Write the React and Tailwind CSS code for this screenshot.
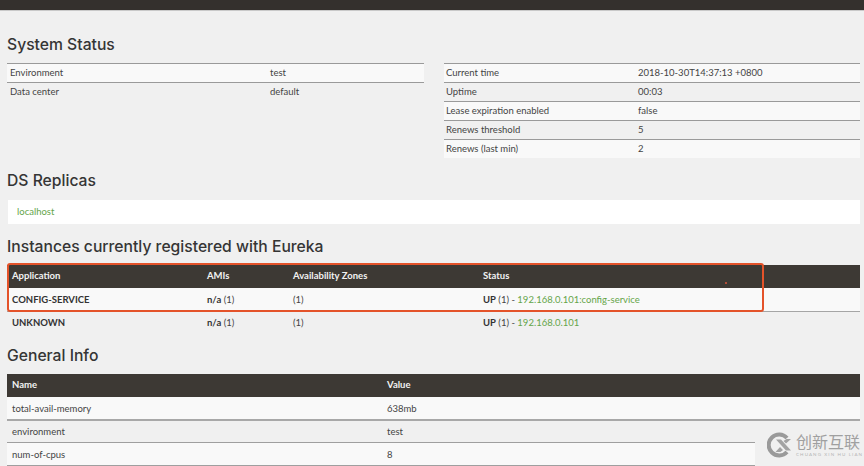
const body = { fontFamily: 'Lato, "Liberation Sans", sans-serif' };
const head = { fontFamily: '"Inter", "Liberation Sans", sans-serif' };

function Title({ children, className = "" }) {
  return (
    <h2 style={head} className={`text-[15.7px] leading-[24px] font-medium text-[#353535] ${className}`}>
      {children}
    </h2>
  );
}

function StatusTable({ rows, first, pad, className = "" }) {
  return (
    <div className={className}>
      {rows.map(([k, v], i) => (
        <div
          key={k}
          className={`flex h-[19px] items-center border-t border-[#9a9a9a] ${pad} ${i % 2 === 0 ? "bg-[#f9f9f9]" : ""}`}
        >
          <div style={{ width: first }} className="shrink-0">{k}</div>
          <div>{v}</div>
        </div>
      ))}
    </div>
  );
}

function Up({ link }) {
  return (
    <>
      <b className="font-bold text-[#333]">UP</b> (1) - <a className="text-[#65a54a]">{link}</a>
    </>
  );
}

const instances = [
  ["CONFIG-SERVICE", "192.168.0.101:config-service", "bg-[#f9f9f9] border-b border-[#a5a5a5] h-[24px] pt-px"],
  ["UNKNOWN", "192.168.0.101", "h-[23px]"],
];

const info = [
  ["total-avail-memory", "638mb", "bg-[#f9f9f9] border-[#a8a8a8] border-b-2 h-[24px] pt-[2px]"],
  ["environment", "test", "border-[#9f9f9f] border-b h-[22px] pt-[2px]"],
  ["num-of-cpus", "8", "bg-[#f9f9f9] border-[#9f9f9f] border-b h-[23px] pt-[2px]"],
];

export default function App() {
  return (
    <div style={body} className="relative h-[466px] w-[864px] overflow-hidden bg-[#f0f0f0] text-[9.5px] text-[#444]">
      <div className="h-[11px] border-b border-[#c9c9c9] bg-[#34302d]" />
      <main className="pl-[7px] pr-[4px]">
        <Title className="pt-[22px]">System Status</Title>
        <div className="mt-[6px] flex h-[96px] gap-[20px]">
          <StatusTable
            className="w-[417px]"
            first={260}
            pad="pl-[3px]"
            rows={[["Environment", "test"], ["Data center", "default"]]}
          />
          <StatusTable
            className="w-[416px]"
            first={192}
            pad="pl-[2px]"
            rows={[
              ["Current time", "2018-10-30T14:37:13 +0800"],
              ["Uptime", "00:03"],
              ["Lease expiration enabled", "false"],
              ["Renews threshold", "5"],
              ["Renews (last min)", "2"],
            ]}
          />
        </div>
        <Title className="mt-[10px]">DS Replicas</Title>
        <div className="ml-px mt-[7px] flex h-[24px] items-center bg-white pl-[9px] text-[#65a54a]">localhost</div>
        <Title className="mt-[11px]">Instances currently registered with Eureka</Title>
        <div className="mt-[6px]">
          <div className="flex h-[23px] items-center bg-[#3d3934] pl-[5px] font-bold text-[#f2f2f2]">
            <div className="w-[195px]">Application</div>
            <div className="w-[86px]">AMIs</div>
            <div className="w-[190px]">Availability Zones</div>
            <div>Status</div>
          </div>
          {instances.map(([name, link, cls]) => (
            <div key={name} className={`flex items-center pl-[5px] ${cls}`}>
              <div className="w-[195px] font-bold text-[#333]">{name}</div>
              <div className="w-[86px]"><b className="font-bold text-[#333]">n/a</b> (1)</div>
              <div className="w-[190px]">(1)</div>
              <div><Up link={link} /></div>
            </div>
          ))}
        </div>
        <Title className="mt-[9px]">General Info</Title>
        <div className="mt-[6px]">
          <div className="flex h-[23px] items-center bg-[#3d3934] pl-[5px] font-bold text-[#f2f2f2]">
            <div className="w-[375px]">Name</div>
            <div>Value</div>
          </div>
          {info.map(([k, v, cls]) => (
            <div key={k} className={`flex items-center pl-[5px] ${cls}`}>
              <div className="w-[375px]">{k}</div>
              <div>{v}</div>
            </div>
          ))}
        </div>
      </main>

      <div className="absolute left-[7px] top-[263px] h-[49px] w-[757px] rounded-[3px] border-2 border-[#e4532a]" />
      <div className="absolute left-[725px] top-[282px] size-[2px] rounded-full bg-[#d8553a]" />

      <div className="absolute left-[755px] top-[441px] h-[25px] w-[10px] bg-[#f0f0f0]" />
      <div className="absolute left-[765px] top-[423px] flex h-[43px] w-[99px] items-center gap-[3px] bg-[#f0f0f0] pl-[2px]">
        <svg width="26" height="26" viewBox="0 0 26 26" fill="none" className="shrink-0">
          <path d="M20 6A10.5 10.5 0 1 0 20 20" stroke="#9a9a9a" strokeWidth="4" />
          <path d="M9 7.5h5l10 11h-5zM13 15l3 3-2.5 2H8.500zM19 11.500l-2.500-2.500 3-2H24z" fill="#a3a3a3" />
        </svg>
        <div className="flex flex-col items-start">
          <div style={{ fontFamily: '"Noto Sans CJK SC", sans-serif' }} className="h-[17px] text-[16px] leading-[17px] text-[#a0a0a0]">创新互联</div>
          <div className="mt-[2px] h-[5px] text-[4.5px] leading-[5px] tracking-[1.1px] whitespace-nowrap text-[#b5b5b5]">CHUANG XIN HU LIAN</div>
        </div>
      </div>
    </div>
  );
}
